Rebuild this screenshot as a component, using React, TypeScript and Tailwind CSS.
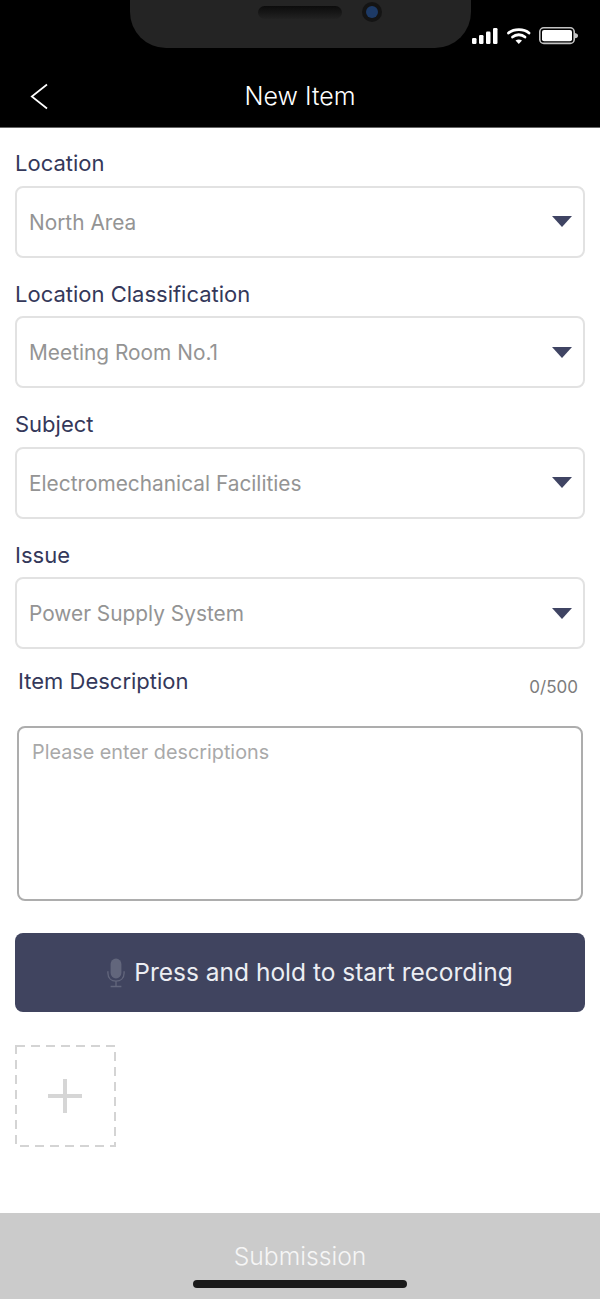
import React from "react";

const font = { fontFamily: "Inter, 'Liberation Sans', sans-serif" };

function Field({ label, value }: { label: string; value: string }) {
  return (
    <div className="flex flex-col">
      <div className="h-[58.5px] pt-[22px] text-[22px] leading-[29px] text-[#34385a]">{label}</div>
      <div className="h-[72px] flex items-center justify-between pl-[12px] pr-[11px] rounded-[8px] border-2 border-[#e2e2e2] bg-white">
        <span className="pt-[2px] text-[20.85px] text-[#949494]">{value}</span>
        <svg width="20" height="11" viewBox="0 0 20 11"><path d="M0 0H20L10 11Z" fill="#3f4463" /></svg>
      </div>
    </div>
  );
}

export default function App() {
  return (
    <div style={font} className="relative w-[600px] h-[1299px] bg-white overflow-hidden flex flex-col">
      {/* Header */}
      <div className="relative h-[128px] shrink-0 bg-black border-b border-[#666] flex items-end justify-center pb-[16px]">
        <div className="absolute left-[130px] top-0 w-[341px] h-[48px] bg-[#242424] rounded-b-[36px]" />
        <div className="absolute left-[258px] top-[6px] w-[84px] h-[13px] rounded-full bg-gradient-to-b from-[#0c0c0c] to-[#222]" />
        <div className="absolute left-[362px] top-[2px] w-[20px] h-[20px] rounded-full bg-[#141414] flex items-center justify-center">
          <div className="w-[12px] h-[12px] rounded-full bg-[#1d3a66]" />
        </div>
        <svg className="absolute left-[472px] top-[27px]" width="108" height="20" viewBox="0 0 108 20" fill="none">
          <rect x="0" y="11" width="4.5" height="6" rx="1.2" fill="#fff" />
          <rect x="7" y="8" width="4.5" height="9" rx="1.2" fill="#fff" />
          <rect x="14" y="4.5" width="4.5" height="12.5" rx="1.2" fill="#fff" />
          <rect x="21" y="1" width="4.5" height="16" rx="1.2" fill="#fff" />
          <path d="M36.5 6 C42 1.5 52 1.5 57 6" stroke="#fff" strokeWidth="2.8" strokeLinecap="round" />
          <path d="M40.5 10 C44 7 49.5 7 53 10" stroke="#fff" strokeWidth="2.8" strokeLinecap="round" />
          <path d="M43.5 13.5 Q46.8 11.5 50 13.5 L46.8 17Z" fill="#fff" />
          <rect x="67.8" y="0.8" width="34.4" height="15.6" rx="4" stroke="#c4c4c4" strokeWidth="1.6" />
          <rect x="70" y="3" width="30" height="11.2" rx="2" fill="#fff" />
          <path d="M103 6 C105 6.3 106 7.5 106 8.7 C106 10 105 11 103 11.3Z" fill="#c4c4c4" />
        </svg>
        <svg className="absolute left-[30px] top-[83px]" width="18" height="27" viewBox="0 0 18 27" fill="none">
          <path d="M17 1.5 L1.8 13.5 L17 25.5" stroke="#fff" strokeWidth="1.7" />
        </svg>
        <span className="text-[25px] leading-[30px] font-light text-white">New Item</span>
      </div>

      {/* Form */}
      <div className="flex-1 flex flex-col px-[15px]">
        <div className="flex flex-col -mt-[1px]">
          <Field label="Location" value="North Area" />
          <Field label="Location Classification" value="Meeting Room No.1" />
          <Field label="Subject" value="Electromechanical Facilities" />
          <Field label="Issue" value="Power Supply System" />
        </div>
        <div className="flex justify-between pl-[3px] pr-[7px] mt-[18px] h-[59px]">
          <span className="text-[22px] leading-[29px] text-[#34385a]">Item Description</span>
          <span className="text-[17px] leading-[20px] mt-[10px] text-[#7c7c7c]">0/500</span>
        </div>
        <div className="mx-[2px] h-[175px] rounded-[8px] border-2 border-[#adadad] px-[13px] pt-[11px] text-[19.8px] leading-[26px] text-[#a9a9a9]">
          Please enter descriptions
        </div>
        <div className="mt-[32px] h-[79px] rounded-[8px] bg-[#40445f] flex items-center justify-center gap-[9px] pl-[20px]">
          <svg width="18" height="32" viewBox="0 0 20 32" fill="none">
            <rect x="4" y="0" width="12" height="22" rx="6" fill="#62667c" />
            <path d="M1 14 V16 C1 22 5 25 10 25 C15 25 19 22 19 16 V14 M10 25 V31 M4 31 H16" stroke="#62667c" strokeWidth="1.5" />
          </svg>
          <span className="text-[24.5px] text-[#eceef3]">Press and hold to start recording</span>
        </div>
        <div className="relative mt-[33px] w-[101px] h-[102px] flex items-center justify-center pr-[2px]">
          <svg className="absolute left-0 top-0" width="101" height="102" viewBox="0 0 101 102" fill="none">
            <rect x="1" y="1" width="99" height="100" stroke="#d4d4d4" strokeWidth="2" strokeDasharray="9 6" />
          </svg>
          <svg width="36" height="36" viewBox="0 0 36 36"><path d="M16 1H20V16H35V20H20V35H16V20H1V16H16Z" fill="#d6d6d6" /></svg>
        </div>
      </div>

      {/* Footer */}
      <div className="relative h-[86px] shrink-0 bg-[#cbcbcb] flex justify-center pt-[27px]">
        <span className="text-[24.7px] leading-[32px] font-light text-[#f6f6f6]">Submission</span>
        <div className="absolute left-[193px] top-[67px] w-[214px] h-[8px] rounded-full bg-[#1a1a1a]" />
      </div>
    </div>
  );
}
